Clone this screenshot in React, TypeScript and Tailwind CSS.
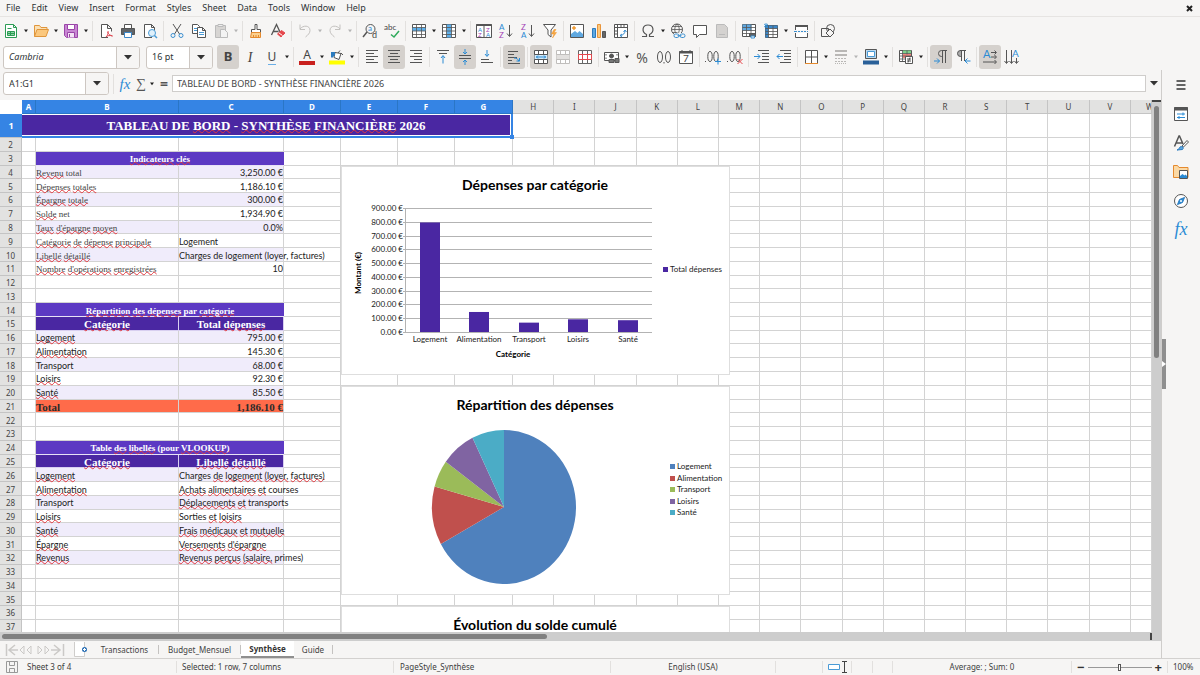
import type { ReactNode } from "react";

const ui = "font-['Noto_Sans','Open_Sans',sans-serif]";
const sans = "font-['Lato',sans-serif]";
const serif = "font-['Liberation_Serif',serif]";

/* ---------- small building blocks ---------- */

const Icon = ({ children, color = "#555" }: { children: ReactNode; color?: string }) => (
  <svg width="16" height="16" viewBox="0 0 16 16" fill="none" stroke={color} aria-hidden="true">
    {children}
  </svg>
);

const Tool = ({ label, pressed, children }: { label: string; pressed?: boolean; children: ReactNode }) => (
  <button
    type="button"
    aria-label={label}
    aria-pressed={pressed}
    className={`flex h-6 w-[22px] shrink-0 items-center justify-center rounded-[3px] ${pressed ? "bg-[#d5d1cd]" : ""}`}
  >
    {children}
  </button>
);

const Arrow = ({ label, dim }: { label: string; dim?: boolean }) => (
  <button type="button" aria-label={label} className="flex h-6 w-2 shrink-0 items-center justify-center">
    <svg width="6" height="4" viewBox="0 0 6 4" fill={dim ? "#b5b5b5" : "#222"} aria-hidden="true">
      <path d="M1 0.5h4L3 3.2z" />
    </svg>
  </button>
);

const Caret = () => (
  <svg width="8" height="5" viewBox="0 0 8 5" fill="#333" aria-hidden="true">
    <path d="M0 0h8L4 4.5z" />
  </svg>
);

const Sep = () => <div className="mx-[2px] h-5 w-px shrink-0 bg-[#e2e0de]" />;

/* ---------- icons ---------- */

const lines = (rows: number[][]) => (
  <path d={rows.map(([x1, x2, y]) => `M${x1} ${y}.5H${x2}`).join("")} />
);

const NewIcon = () => (
  <Icon color="#2c9c55">
    <path d="M2.5 1.5h8l3 3v10h-11zM10.5 1.5v3h3" fill="#fff" />
    <path d="M4.5 8.5h7v4h-7zM4.5 10.5h7M7.5 8.5v4" fill="#8bd5a4" />
    <path d="M4.5 5.5h4" />
  </Icon>
);
const OpenIcon = () => (
  <Icon color="#e0963c">
    <path d="M1.5 13.5v-11h5l1.500 2h6v3" fill="#fbe0b3" />
    <path d="M1.500 13.500L4 6.500h11.500l-2.500 7z" fill="#fbc87e" />
  </Icon>
);
const SaveIcon = () => (
  <Icon color="#9a45a8">
    <path d="M1.500 1.500h13v13h-11l-2-2z" fill="#c886d3" />
    <path d="M4.500 1.500h7v5h-7z" fill="#fff" />
    <path d="M4.500 14.500v-5h7v5" fill="#f3e2f5" />
    <path d="M6.500 11v3" />
  </Icon>
);
const PdfIcon = () => (
  <Icon>
    <path d="M10 14.500H3.500v-13h6l4 4v3M9.500 1.500v4h4" fill="#fff" />
    <path d="M8 14c2-2 2.500-4 2-6M9.500 9c1 2 2.500 3.500 5 4M8 14c1.500-1.500 4-2 6.500-1" stroke="#e0454f" />
  </Icon>
);
const PrintIcon = () => (
  <Icon>
    <path d="M4.500 5.500v-4h7v4" fill="#fff" />
    <path d="M1.500 5.500h13v6h-13z" fill="#606468" />
    <path d="M4.500 9.500h7v5h-7z" fill="#fff" stroke="#3b87c8" />
  </Icon>
);
const PreviewIcon = () => (
  <Icon>
    <path d="M10 14.500H2.500v-13h7l3 3v3M9.500 1.500v3h3" fill="#fff" />
    <circle cx="10" cy="10" r="3.500" fill="#dff0fb" stroke="#4a9bd6" />
    <path d="M12.500 12.500l2.500 2.500" stroke="#4a9bd6" strokeWidth="1.500" />
  </Icon>
);
const CutIcon = () => (
  <Icon>
    <path d="M4 1l6.500 10M12 1L5.500 11" />
    <circle cx="4" cy="12.500" r="2" stroke="#3b8fd0" />
    <circle cx="12" cy="12.500" r="2" stroke="#3b8fd0" />
  </Icon>
);
const CopyIcon = () => (
  <Icon>
    <path d="M1.500 1.500h5l2 2v7h-7z" fill="#fff" />
    <path d="M3 5.500h4M3 7.500h4" stroke="#4a9bd6" />
    <path d="M6.500 4.500h5l3 3v7h-8zM11.500 4.500v3h3" fill="#fff" />
    <path d="M8 9.500h5M8 11.500h5" stroke="#4a9bd6" />
  </Icon>
);
const PasteIcon = () => (
  <Icon color="#bbb">
    <path d="M2.500 2.500h10v12h-10z" fill="#d7d5d3" />
    <path d="M5 1.500h5v2H5z" fill="#eee" />
    <path d="M7.500 6.500h4l3 3v5h-7z" fill="#f3f3f3" />
  </Icon>
);
const BrushIcon = () => (
  <Icon>
    <path d="M7 1.500h2v5h3.500v3h-9v-3H7z" fill="#fff" />
    <path d="M3.500 9.500h9v5h-10z" fill="#fbd08e" stroke="#e58a2e" />
    <path d="M5.500 14v-2M8 14v-2M10.500 14v-2" stroke="#e58a2e" />
  </Icon>
);
const ClearIcon = () => (
  <Icon>
    <path d="M1.500 12L6.500 1.500 10 9M3 8.500h5.500" strokeWidth="1.300" />
    <path d="M7.500 11l4-3.500 3.500 2.500-4 4z" fill="#e5484d" stroke="#e5484d" />
    <path d="M9 10l3.500 2.500" stroke="#fff" />
  </Icon>
);
const UndoIcon = ({ flip }: { flip?: boolean }) => (
  <Icon color="#c3c1bf">
    <path d={flip ? "M13 1.500v5H8M13 6C10 2 3 2 3 7.500c0 2.500 2 4.500 4.500 6.500" : "M3 1.500v5h5M3 6c3-4 10-4 10 1.500 0 2.500-2 4.500-4.500 6.500"} />
  </Icon>
);
const FindIcon = () => (
  <Icon>
    <circle cx="8.500" cy="6" r="4.500" />
    <path d="M5 9L1 14" strokeWidth="1.500" />
    <text x="6" y="8" fontSize="8" fill="#2b8bd4" stroke="none" className={sans}>a</text>
    <text x="10" y="15" fontSize="9" fill="#444" stroke="none" className={sans}>d</text>
  </Icon>
);
const SpellIcon = () => (
  <Icon>
    <text x="0" y="7" fontSize="8" fill="#444" stroke="none" className={sans}>abc</text>
    <path d="M7 11.500l3 2.500 5-6" stroke="#2faa5b" strokeWidth="1.500" />
  </Icon>
);
const GridIcon = ({ fill, area }: { fill?: string; area?: string }) => (
  <Icon>
    <path d="M1.500 1.500h13v13h-13z" fill="#fff" />
    {area && <path d={area} fill={fill} stroke="none" />}
    <path d="M1.500 4.500h13M1.500 8h13M1.500 11.500h13M5.500 1.500v13M10.500 1.500v13" strokeWidth="0.800" />
  </Icon>
);
const SortIcon = ({ top, bottom }: { top: string; bottom: string }) => (
  <Icon>
    <text x="1" y="7" fontSize="8" fill={top === "A" ? "#2b8bd4" : "#a23fb5"} stroke="none" className={sans}>{top}</text>
    <text x="1" y="15" fontSize="8" fill={top === "A" ? "#a23fb5" : "#2b8bd4"} stroke="none" className={sans}>{bottom}</text>
    <path d="M11.500 2v11M9 10.500l2.500 3 2.500-3" />
  </Icon>
);
const SortBoxIcon = () => (
  <Icon>
    <path d="M.5 1.500h15v13H.5zM8 2v12" fill="#fff" />
    <path d="M.5 2h15" strokeWidth="2" />
    <g fontSize="6" stroke="none" className={sans}>
      <text x="2" y="9" fill="#2b8bd4">A</text>
      <text x="2" y="14" fill="#a23fb5">Z</text>
      <text x="10" y="9" fill="#a23fb5">Z</text>
      <text x="10" y="14" fill="#2b8bd4">A</text>
    </g>
  </Icon>
);
const FilterIcon = () => (
  <Icon>
    <path d="M1.500 1.500h12L9 7v7L6 11.500V7z" fill="#fff" />
    <path d="M12 6.500L9.500 11h2.500l-1.500 4 4-5.500H12l2-3z" fill="#f5a742" stroke="#f0942a" strokeWidth="0.500" />
  </Icon>
);
const ImageIcon = () => (
  <Icon>
    <path d="M1.500 1.500h13v13h-13z" fill="#fff" />
    <path d="M2 14v-3l4-3 2.500 2 2-2L14 11v3z" fill="#5fa8e0" stroke="none" />
    <circle cx="5" cy="5" r="1.300" fill="#f7b045" stroke="#f0942a" />
  </Icon>
);
const ChartIcon = () => (
  <Icon>
    <path d="M1.500 5.500h3v9h-3z" fill="#5fa8e0" stroke="#2b7bbf" />
    <path d="M6.500 1.500h3v13h-3z" fill="#fbc87e" stroke="#e8943a" />
    <path d="M11.500 8.500h3v6h-3z" fill="#666" />
  </Icon>
);
const PivotIcon = () => (
  <Icon>
    <path d="M1.500 1.500h13v13h-13z" fill="#fff" />
    <path d="M1.500 4.500h13M4.500 1.500v13M8 1.500v3M11 1.500v3M1.500 8h3M1.500 11h3" />
    <path d="M7 12.500c3 0 5-2 5-5M9 11l-2 1.500L9 14M10.500 9L12 7l1.500 2" stroke="#3b8fd0" />
  </Icon>
);
const OmegaIcon = () => (
  <Icon>
    <path d="M2 13.500h4.500v-2C1 8.500 2.500 2 8 2s7 6.500 1.500 9.500v2H14" strokeWidth="1.200" />
  </Icon>
);
const LinkIcon = () => (
  <Icon>
    <circle cx="7" cy="6.500" r="5.500" />
    <path d="M1.500 6.500h11M7 1c-3 3-3 8 0 11M7 1c3 3 3 8 0 11M2.500 3.500h9M2.500 9.500h5" strokeWidth="0.800" />
    <path d="M4 10h11v5H4z" fill="#f6f5f4" stroke="none" />
    <rect x="4" y="11" width="5" height="3.500" rx="1.700" stroke="#3b8fd0" />
    <rect x="10" y="11" width="5" height="3.500" rx="1.700" stroke="#3b8fd0" />
    <path d="M7.500 12.700h4" stroke="#3b8fd0" />
  </Icon>
);
const CommentIcon = () => (
  <Icon>
    <path d="M1.500 2.500h13v9h-7l-3 3v-3h-3z" fill="#fff" />
  </Icon>
);
const HeaderIcon = () => (
  <Icon color="#bbb">
    <path d="M2.500 1.500h8l3 3v10h-11z" fill="#d4d2d0" />
    <path d="M5 11.500h6" />
  </Icon>
);
const PrintAreaIcon = () => (
  <Icon>
    <path d="M1.500 1.500h13v12h-13z" fill="#fff" />
    <path d="M1.500 1.500h9v6h-9z" fill="#5fa8e0" stroke="none" />
    <path d="M1.500 4.500h13M1.500 7.500h13M1.500 10.500h13M5.500 1.500v12M10 1.500v12" strokeWidth="0.800" />
    <path d="M8.500 10.500h6v3h-6z" fill="#5d6165" />
    <path d="M10 13h3.500v2H10z" fill="#fff" stroke="#3b8fd0" />
  </Icon>
);
const FreezeIcon = () => (
  <Icon>
    <path d="M2.500 2.500h12v12h-12z" fill="#fff" />
    <path d="M2.500 2.500h12v3h-12zM2.500 5.500h3v9h-3z" fill="#3b87c8" stroke="none" />
    <path d="M2.500 5.500h12M2.500 8.500h12M2.500 11.500h12M5.500 2.500v12M10 2.500v12" strokeWidth="0.800" />
    <path d="M3 0v5M1 1l4 3M5 1L1 4" stroke="#2b8bd4" strokeWidth="0.800" />
  </Icon>
);
const SplitIcon = () => (
  <Icon>
    <path d="M2.500 7V2.500h12V7M2.500 10v4.500h12V10" fill="#fff" />
    <path d="M2 3h13" strokeWidth="2" />
    <path d="M1 8.500h3m1 0h2m1 0h2m1 0h2m1 0h1" stroke="#3b8fd0" />
  </Icon>
);
const ShapesIcon = () => (
  <Icon>
    <path d="M1.500 5.500h7v8h-7z" />
    <circle cx="10.500" cy="5.500" r="4" />
    <path d="M10 6l4 4-4 4-4-4z" fill="#f6f5f4" />
  </Icon>
);

const Merge = ({ kind }: { kind: "center" | "merge" | "split" }) => {
  const color = { center: "#555", merge: "#c0bebc", split: "#666" }[kind];
  const tint = { center: "#d4ebfa", merge: "#e2e0de", split: "#fff" }[kind];
  return (
    <Icon color={color}>
      <path d="M1.500 1.500h13v13h-13z" fill="#fff" />
      <path d="M1.500 5.500h13v5h-13z" fill={tint} stroke="none" />
      <path d="M1.500 5.500h13M1.500 10.500h13M5.500 1.500v4M10.500 1.500v4M5.500 10.500v4M10.500 10.500v4" />
      {kind === "center" && <path d="M3 8h10M5 6.500L3.500 8 5 9.500M11 6.500L12.500 8 11 9.500" stroke="#2b8bd4" />}
      {kind === "split" && <path d="M1.500 5.500h13v5h-13zM5.500 5.500v5M10.500 5.500v5" stroke="#e5484d" />}
    </Icon>
  );
};
const AlignIcon = ({ mode }: { mode: "left" | "center" | "right" }) => {
  const ends = { left: [[2, 14], [2, 10]], center: [[2, 14], [4, 12]], right: [[2, 14], [6, 14]] }[mode];
  return <Icon>{lines([1, 4, 7, 10, 13].map((y, i) => [...ends[i % 2], y]))}</Icon>;
};
const VAlignIcon = ({ mode }: { mode: "top" | "middle" | "bottom" }) => (
  <Icon>
    {mode === "top" && <>{lines([[2, 14, 1], [4, 12, 4]])}<path d="M8 14.500V7M6 9l2-2.500L10 9" stroke="#2b8bd4" /></>}
    {mode === "middle" && <>{lines([[2, 14, 6], [2, 14, 9]])}<path d="M8 0v4.500M6 3l2 2 2-2M8 16v-5M6 13l2-2 2 2" stroke="#2b8bd4" /></>}
    {mode === "bottom" && <>{lines([[2, 10, 10], [2, 14, 13]])}<path d="M8 1v6M6 5l2 2.500L10 5" stroke="#2b8bd4" /></>}
  </Icon>
);
const WrapIcon = () => (
  <Icon>
    {lines([[2, 12, 2], [2, 8, 5], [2, 11, 8], [2, 6, 11], [2, 14, 14]])}
    <path d="M8 9c3 0 4 1 5 3.500M10.500 12h3V9" stroke="#2b8bd4" />
  </Icon>
);
const CurrencyIcon = () => (
  <Icon>
    <path d="M.5 3.500h14v8H.5z" fill="#fff" />
    <circle cx="7.500" cy="7" r="2" fill="#555" />
    <path d="M2 5v1.500M13 5v1.500M2 8.500V10" />
    <path d="M5 10.500h5v3H5zM11 9.500h4v4h-4z" fill="#777" />
  </Icon>
);
const DateIcon = () => (
  <Icon>
    <path d="M1.500 2.500h13v12h-13z" fill="#fff" />
    <path d="M1 3.500h14" strokeWidth="2" />
    <path d="M4 1v2M12 1v2" />
    <text x="5" y="13" fontSize="10" fill="#444" stroke="none" className={sans}>7</text>
  </Icon>
);
const DecimalIcon = ({ remove }: { remove?: boolean }) => (
  <Icon>
    <path d="M.5 12v1" />
    <ellipse cx="5" cy="7.500" rx="2.200" ry="5" />
    <ellipse cx="11" cy="7.500" rx="2.200" ry="5" />
    {remove ? <path d="M10.500 10l5 5M15.500 10l-5 5" stroke="#e5484d" /> : <path d="M13 9.500v6M10 12.500h6" stroke="#2b8bd4" />}
  </Icon>
);
const NumberIcon = () => (
  <Icon>
    <ellipse cx="4" cy="8" rx="2.500" ry="5.500" />
    <path d="M8 13v1.500" />
    <ellipse cx="12" cy="8" rx="2.500" ry="5.500" />
  </Icon>
);
const IndentIcon = ({ out }: { out?: boolean }) => (
  <Icon>
    {lines([[4, 15, 1], [8, 15, 4], [8, 15, 7], [8, 15, 10], [4, 15, 13]])}
    <path d={out ? "M7 7.500H1M3.500 5L1 7.500 3.500 10" : "M0 7.500h6M3.500 5L6 7.500 3.500 10"} stroke="#2b8bd4" />
  </Icon>
);
const BordersIcon = () => (
  <Icon>
    <path d="M2.500 14.500v-13h12v13" fill="#fff" />
    <path d="M8.500 1.500v13M2.500 8h12" />
    <path d="M2 14.500h13" stroke="#e58a2e" />
  </Icon>
);
const LineStyleIcon = () => (
  <Icon color="#b9b7b5">
    <path d="M2 2h12M2 6h12" strokeWidth="2" />
    <path d="M2 9.500h12M2 12.500h12" strokeDasharray="2 1" />
    <path d="M2 14.500h12" strokeDasharray="1 1" />
  </Icon>
);
const BorderColorIcon = () => (
  <Icon>
    <path d="M2.500 .5h11v9h-11z" fill="#bcd9ef" />
    <path d="M4.500 2.500h7v5h-7z" fill="#fff" stroke="#4a9bd6" />
    <path d="M0 11.500h16v4H0z" fill="#2a6099" stroke="none" />
  </Icon>
);
const ConditionalIcon = () => (
  <Icon>
    <path d="M1.500 1.500h12v11h-12z" fill="#fff" />
    <path d="M5 1.500h8v3H5z" fill="#7fd18c" stroke="none" />
    <path d="M5 5h8v4H5z" fill="#f2857f" stroke="none" />
    <path d="M1.500 4.500h12M1.500 7h12M1.500 10h12M4.500 1.500v11M9 1.500v4" strokeWidth="0.800" />
    <path d="M7.500 7.500h7v7h-7z" fill="#fff" />
    <path d="M9 10h4M9 12h4M12 8.500L10 13.500" />
  </Icon>
);
const ParagraphIcon = ({ rtl }: { rtl?: boolean }) => (
  <Icon>
    {rtl ? (
      <>
        <path d="M5.500 1.500a3 3 0 0 0 0 6h1v-6z" fill="#aaa" />
        <path d="M6.500 12V1.500M9.500 12V1.500M5 1.500h6" />
        <path d="M15.500 12H10M12.500 9.500L10 12l2.500 2.500" stroke="#2b8bd4" />
      </>
    ) : (
      <>
        <path d="M9.500 14V1.500M12.500 14V1.500M14 1.500H8.500a3 3 0 0 0 0 6h1" />
        <path d="M1 12h5.500M4 9.500L6.500 12 4 14.500" stroke="#2b8bd4" />
      </>
    )}
  </Icon>
);
const TextDirIcon = ({ vertical }: { vertical?: boolean }) => (
  <Icon>
    {vertical ? (
      <>
        <path d="M2.500 1v13M7.500 1v13M12.500 9v5M.5 12l2 2.500 2-2.500M5.500 12l2 2.500 2-2.500M10.500 12l2 2.500 2-2.500" />
        <text x="8" y="8" fontSize="10" fill="#2b8bd4" stroke="none" className={sans}>A</text>
      </>
    ) : (
      <>
        <path d="M9 3.500h5M9 8h5M1 13h13M12.500 1.500l2 2-2 2M12.500 6l2 2-2 2M12.500 11l2 2-2 2" />
        <text x="1" y="9" fontSize="11" fill="#2b8bd4" stroke="none" className={sans}>A</text>
      </>
    )}
  </Icon>
);

/* ---------- toolbars ---------- */

const StandardToolbar = () => (
  <div className="flex h-[27px] shrink-0 items-center" role="toolbar" aria-label="Standard">
    <Tool label="New"><NewIcon /></Tool>
    <Arrow label="New options" />
    <Tool label="Open"><OpenIcon /></Tool>
    <Arrow label="Open options" />
    <Tool label="Save"><SaveIcon /></Tool>
    <Arrow label="Save options" />
    <Sep />
    <Tool label="Export as PDF"><PdfIcon /></Tool>
    <Tool label="Print"><PrintIcon /></Tool>
    <Tool label="Print preview"><PreviewIcon /></Tool>
    <Sep />
    <Tool label="Cut"><CutIcon /></Tool>
    <Tool label="Copy"><CopyIcon /></Tool>
    <Tool label="Paste"><PasteIcon /></Tool>
    <Arrow label="Paste options" dim />
    <Sep />
    <Tool label="Clone formatting"><BrushIcon /></Tool>
    <Tool label="Clear formatting"><ClearIcon /></Tool>
    <Sep />
    <Tool label="Undo"><UndoIcon /></Tool>
    <Arrow label="Undo history" dim />
    <Tool label="Redo"><UndoIcon flip /></Tool>
    <Arrow label="Redo history" dim />
    <Sep />
    <Tool label="Find and replace"><FindIcon /></Tool>
    <Tool label="Spelling"><SpellIcon /></Tool>
    <Sep />
    <Tool label="Row"><GridIcon fill="#5fb0ea" area="M1.500 4.500h13v3.500h-13z" /></Tool>
    <Arrow label="Row options" />
    <Tool label="Column"><GridIcon fill="#5fb0ea" area="M5.500 1.500h5v13h-5z" /></Tool>
    <Arrow label="Column options" />
    <Sep />
    <Tool label="Sort"><SortBoxIcon /></Tool>
    <Tool label="Sort ascending"><SortIcon top="A" bottom="Z" /></Tool>
    <Tool label="Sort descending"><SortIcon top="Z" bottom="A" /></Tool>
    <Tool label="AutoFilter"><FilterIcon /></Tool>
    <Sep />
    <Tool label="Insert image"><ImageIcon /></Tool>
    <Tool label="Insert chart"><ChartIcon /></Tool>
    <Tool label="Pivot table"><PivotIcon /></Tool>
    <Sep />
    <Tool label="Special character"><OmegaIcon /></Tool>
    <Arrow label="More characters" />
    <Tool label="Hyperlink"><LinkIcon /></Tool>
    <Tool label="Comment"><CommentIcon /></Tool>
    <Tool label="Headers and footers"><HeaderIcon /></Tool>
    <Sep />
    <Tool label="Print area"><PrintAreaIcon /></Tool>
    <Tool label="Freeze"><FreezeIcon /></Tool>
    <Arrow label="Freeze options" />
    <Tool label="Split window"><SplitIcon /></Tool>
    <Sep />
    <Tool label="Draw functions"><ShapesIcon /></Tool>
  </div>
);

const Combo = ({ label, value, width, italic }: { label: string; value: string; width: string; italic?: boolean }) => (
  <div className={`flex h-[23px] shrink-0 overflow-hidden rounded-[3px] border border-[#cdc7c2] bg-white ${width}`}>
    <input aria-label={label} defaultValue={value} className={`min-w-0 flex-1 px-[5px] text-[9px] text-[#2e3436] ${italic ? "italic" : ""}`} />
    <button type="button" aria-label={`${label} list`} className="flex w-[23px] items-center justify-center border-l border-[#cdc7c2] bg-[#f6f5f4]">
      <Caret />
    </button>
  </div>
);

const FormattingToolbar = () => (
  <div className="flex h-[26px] shrink-0 items-center pl-[3px]" role="toolbar" aria-label="Formatting">
    <Combo label="Font name" value="Cambria" width="w-[137px]" italic />
    <div className="w-[6px]" />
    <Combo label="Font size" value="16 pt" width="w-[67px]" />
    <div className="w-1" />
    <Tool label="Bold" pressed><span className="text-[13px] font-bold text-[#444]">B</span></Tool>
    <Tool label="Italic"><span className={`text-[14px] italic text-[#444] ${serif}`}>I</span></Tool>
    <Tool label="Underline"><span className="border-b border-[#6aaee6] text-[12px] leading-[14px] text-[#444]">U</span></Tool>
    <Arrow label="Underline options" />
    <Sep />
    <Tool label="Font colour">
      <span className="flex w-4 flex-col items-center text-[12px] leading-[12px] text-[#444]">A<span className="h-1 w-4 bg-[#c9211e]" /></span>
    </Tool>
    <Arrow label="Font colour options" />
    <Tool label="Highlighting">
      <Icon>
        <path d="M6 3.500l6 1-2 6-5-2z" fill="#fff" />
        <path d="M2 8V3h4v3L3 9z" fill="#2b7bbf" stroke="none" />
        <path d="M9 4l2-2.500M12 4l2 2" />
        <path d="M0 11.500h16v4H0z" fill="#ffff00" stroke="none" />
      </Icon>
    </Tool>
    <Arrow label="Highlighting options" />
    <Sep />
    <Tool label="Align left"><AlignIcon mode="left" /></Tool>
    <Tool label="Align centre" pressed><AlignIcon mode="center" /></Tool>
    <Tool label="Align right"><AlignIcon mode="right" /></Tool>
    <Sep />
    <Tool label="Align top"><VAlignIcon mode="top" /></Tool>
    <Tool label="Centre vertically" pressed><VAlignIcon mode="middle" /></Tool>
    <Tool label="Align bottom"><VAlignIcon mode="bottom" /></Tool>
    <Sep />
    <Tool label="Wrap text" pressed><WrapIcon /></Tool>
    <Sep />
    <Tool label="Merge and centre" pressed><Merge kind="center" /></Tool>
    <Tool label="Merge cells"><Merge kind="merge" /></Tool>
    <Tool label="Unmerge cells"><Merge kind="split" /></Tool>
    <Sep />
    <Tool label="Currency"><CurrencyIcon /></Tool>
    <Arrow label="Currency options" />
    <Tool label="Percent"><span className="text-[14px] text-[#555]">%</span></Tool>
    <Tool label="Number"><NumberIcon /></Tool>
    <Tool label="Date"><DateIcon /></Tool>
    <Sep />
    <Tool label="Add decimal place"><DecimalIcon /></Tool>
    <Tool label="Delete decimal place"><DecimalIcon remove /></Tool>
    <Sep />
    <Tool label="Increase indent"><IndentIcon /></Tool>
    <Tool label="Decrease indent"><IndentIcon out /></Tool>
    <Sep />
    <Tool label="Borders"><BordersIcon /></Tool>
    <Arrow label="Borders options" />
    <Tool label="Border style"><LineStyleIcon /></Tool>
    <Arrow label="Border style options" dim />
    <Tool label="Border colour"><BorderColorIcon /></Tool>
    <Arrow label="Border colour options" />
    <Sep />
    <Tool label="Conditional"><ConditionalIcon /></Tool>
    <Arrow label="Conditional options" />
    <Sep />
    <Tool label="Left to right" pressed><ParagraphIcon /></Tool>
    <Tool label="Right to left"><ParagraphIcon rtl /></Tool>
    <Sep />
    <Tool label="Horizontal text" pressed><TextDirIcon /></Tool>
    <Tool label="Vertical text"><TextDirIcon vertical /></Tool>
  </div>
);

const FormulaBar = () => (
  <div className="mb-[3px] flex h-[27px] shrink-0 items-center pl-[3px]">
    <Combo label="Name box" value="A1:G1" width="w-[106px]" />
    <div className="ml-1 h-5 w-px bg-[#e2e0de]" />
    <button type="button" aria-label="Function wizard" className={`w-[22px] text-[15px] leading-4 italic text-[#2b8bd4] ${serif}`}>fx</button>
    <button type="button" aria-label="Select function" className={`w-2 text-[14px] leading-4 text-[#555] ${serif}`}>∑</button>
    <div className="w-1" />
    <Arrow label="Function list" />
    <button type="button" aria-label="Formula" className="w-4 text-[14px] leading-4 font-bold text-[#555]">=</button>
    <input
      aria-label="Input line"
      defaultValue="TABLEAU DE BORD - SYNTHÈSE FINANCIÈRE 2026"
      className="h-[17px] min-w-0 flex-1 border border-[#cfcdcb] bg-white px-1 text-[9px] text-[#444]"
    />
    <button type="button" aria-label="Expand formula bar" className="flex w-[15px] justify-center"><Caret /></button>
  </div>
);

/* ---------- sheet ---------- */

// A word that starts with ~ is flagged by the spell checker.
const Words = ({ text }: { text: string }) => (
  <>
    {text.split(" ").map((w, i) => (
      <span key={i}>
        {i > 0 && " "}
        {w.startsWith("~") ? (
          <span className="underline decoration-[#e0383e] decoration-wavy decoration-1 -underline-offset-1 [text-decoration-skip-ink:none]">{w.slice(1)}</span>
        ) : (
          w
        )}
      </span>
    ))}
  </>
);

type Kind = "kpi" | "plain" | "band" | "head" | "total";
type Row = { kind: Kind; b: string; c?: string; num?: boolean; shade?: boolean };

const rows: Record<number, Row> = {
  3: { kind: "band", b: "~Indicateurs ~clés" },
  4: { kind: "kpi", b: "~Revenu total", c: "3,250.00 €", num: true, shade: true },
  5: { kind: "kpi", b: "~Dépenses ~totales", c: "1,186.10 €", num: true },
  6: { kind: "kpi", b: "~Épargne ~totale", c: "300.00 €", num: true, shade: true },
  7: { kind: "kpi", b: "~Solde net", c: "1,934.90 €", num: true },
  8: { kind: "kpi", b: "~Taux ~d'épargne ~moyen", c: "0.0%", num: true, shade: true },
  9: { kind: "kpi", b: "~Catégorie ~de ~dépense ~principale", c: "Logement" },
  10: { kind: "kpi", b: "~Libellé ~détaillé", c: "Charges de logement (loyer, factures)", shade: true },
  11: { kind: "kpi", b: "~Nombre ~d'opérations ~enregistrées", c: "10", num: true },
  14: { kind: "band", b: "~Répartition ~des ~dépenses par ~catégorie" },
  15: { kind: "head", b: "~Catégorie", c: "Total ~dépenses" },
  16: { kind: "plain", b: "~Logement", c: "795.00 €", num: true, shade: true },
  17: { kind: "plain", b: "~Alimentation", c: "145.30 €", num: true },
  18: { kind: "plain", b: "Transport", c: "68.00 €", num: true, shade: true },
  19: { kind: "plain", b: "~Loisirs", c: "92.30 €", num: true },
  20: { kind: "plain", b: "~Santé", c: "85.50 €", num: true, shade: true },
  21: { kind: "total", b: "Total", c: "1,186.10 €", num: true },
  24: { kind: "band", b: "Table ~des ~libellés (pour ~VLOOKUP)" },
  25: { kind: "head", b: "~Catégorie", c: "~Libellé ~détaillé" },
  26: { kind: "plain", b: "~Logement", c: "Charges ~de ~logement ~(loyer, ~factures)", shade: true },
  27: { kind: "plain", b: "~Alimentation", c: "~Achats ~alimentaires ~et courses" },
  28: { kind: "plain", b: "Transport", c: "~Déplacements ~et transports", shade: true },
  29: { kind: "plain", b: "~Loisirs", c: "Sorties ~et ~loisirs" },
  30: { kind: "plain", b: "~Santé", c: "~Frais ~médicaux ~et ~mutuelle", shade: true },
  31: { kind: "plain", b: "~Épargne", c: "~Versements ~d'épargne" },
  32: { kind: "plain", b: "~Revenus", c: "~Revenus ~perçus ~(salaire, primes)", shade: true },
};

const pad = "px-0 pt-[2px] pb-0";
const cell = `border-r border-b border-[#d3d3d3] ${pad}`;
const headCell = `border-r border-b border-[#d8cff0] bg-[#4a27a2] text-center text-[11px] font-bold text-white ${pad} ${serif}`;
const totalCell = `${cell} bg-[#ff6b4a] text-[11px] font-bold text-[#2b2b2b] ${serif}`;
const cols = "ABCDEFGHIJKLMNOPQRSTUVW".split("");
const widths: Record<string, string> = { A: "w-[14px]", B: "w-[143px]", C: "w-[105px]", D: "w-[57px]", E: "w-[57px]", F: "w-[57px]", G: "w-[58px]", W: "w-[21px]" };

const Blank = ({ n }: { n: number }) => (
  <>
    {Array.from({ length: n }, (_, i) => (
      <td key={i} className={cell} />
    ))}
  </>
);

const DataCells = ({ row }: { row: Row }) => {
  if (row.kind === "band") {
    return (
      <td colSpan={2} className={`border-b border-[#e8e2f6] bg-[#5c39c3] text-center text-[9px] font-bold text-white ${pad} ${serif}`}>
        <Words text={row.b} />
      </td>
    );
  }
  if (row.kind === "head") {
    return (
      <>
        <td className={headCell}><Words text={row.b} /></td>
        <td className={headCell}><Words text={row.c ?? ""} /></td>
      </>
    );
  }
  if (row.kind === "total") {
    return (
      <>
        <td className={totalCell}>{row.b}</td>
        <td className={`${totalCell} text-right`}>{row.c}</td>
      </>
    );
  }
  const bg = row.shade ? "bg-[#f0ecfb]" : "";
  return (
    <>
      <td className={`${cell} ${bg} text-[9px] ${row.kind === "kpi" ? `text-[#444] ${serif}` : "text-[#222]"}`}><Words text={row.b} /></td>
      <td className={`${cell} ${bg} text-[9px] text-[#222] ${row.num ? "text-right" : ""}`}><Words text={row.c ?? ""} /></td>
    </>
  );
};

const Grid = () => (
  <table className={`h-[534px] w-full table-fixed border-separate border-spacing-0 leading-[10px] whitespace-nowrap ${sans}`}>
    <thead className={ui}>
      <tr className="h-[14px] text-[8px]">
        <th className="w-[22px] p-0" aria-label="Select all" />
        {cols.map((c, i) => (
          <th
            key={c}
            className={`h-[14px] overflow-hidden border-r border-b p-0 leading-3 ${widths[c] ?? ""} ${i < 7 ? "border-[#2a76c6] bg-[#3584e4] font-bold text-white" : "border-[#c4c4c4] bg-[#e2e2e1] font-normal text-[#444]"} ${c === "W" ? "pl-[15px]" : ""}`}
          >
            {c}
          </th>
        ))}
      </tr>
    </thead>
    <tbody>
      <tr className="h-6">
        <th className={`border-b border-[#c4c4c4] bg-[#3584e4] p-0 text-[9px] font-bold text-white ${ui}`}>1</th>
        <td colSpan={7} className="relative h-6 border-r-2 border-b-2 border-[#3584e4] bg-white p-0 pt-px pr-px pb-px">
          <div className={`flex h-[20px] items-center justify-center bg-[#4a27a2] pt-px text-[13px] font-bold text-white ${serif}`}>
            <span><Words text="TABLEAU DE ~BORD - ~SYNTHÈSE ~FINANCIÈRE 2026" /></span>
          </div>
          <span className="absolute -right-[3px] -bottom-[3px] size-1 bg-[#3584e4]" />
        </td>
        <Blank n={16} />
      </tr>
      {Array.from({ length: 36 }, (_, i) => i + 2).map((n) => (
        <tr key={n}>
          <th className={`border-r border-b border-[#c4c4c4] bg-[#e2e2e1] text-[8px] font-normal text-[#444] ${pad} ${ui}`}>{n}</th>
          <td className={cell} />
          {rows[n] ? <DataCells row={rows[n]} /> : <Blank n={2} />}
          <Blank n={20} />
        </tr>
      ))}
    </tbody>
  </table>
);

/* ---------- charts ---------- */

const spend = [
  { name: "Logement", value: 795, color: "#4f81bd" },
  { name: "Alimentation", value: 145.3, color: "#c0504d" },
  { name: "Transport", value: 68, color: "#9bbb59" },
  { name: "Loisirs", value: 92.3, color: "#8064a2" },
  { name: "Santé", value: 85.5, color: "#4bacc6" },
];

const ChartBox = ({ title, children }: { title: string; children?: ReactNode }) => (
  <section className={`h-[209px] w-[389px] shrink-0 border border-[#dedede] bg-white ${sans}`}>
    <svg width="387" height="207" viewBox="0 0 387 207" role="img" aria-label={title}>
      <text x="193" y="23" textAnchor="middle" fontSize="14" fontWeight="bold" fill="#000">{title}</text>
      {children}
    </svg>
  </section>
);

const BarChart = () => {
  const y = (v: number) => 165 - (v / 900) * 124;
  return (
    <ChartBox title="Dépenses par catégorie">
      {Array.from({ length: 10 }, (_, i) => i * 100).map((v) => (
        <g key={v}>
          <path d={`M61 ${Math.round(y(v)) + 0.5}H310`} stroke="#b3b3b3" />
          <text x="61" y={y(v) + 3} textAnchor="end" fontSize="8" fill="#222">{v}.00 €</text>
        </g>
      ))}
      <path d="M63.500 41v125" stroke="#b3b3b3" />
      {spend.map((s, i) => (
        <g key={s.name}>
          <rect x={78 + Math.round(i * 49.4)} y={y(s.value)} width="20" height={165 - y(s.value)} fill="#4a27a2" />
          <text x={88 + Math.round(i * 49.4)} y="175" textAnchor="middle" fontSize="8" fill="#222">{s.name}</text>
        </g>
      ))}
      <text x="171" y="190" textAnchor="middle" fontSize="8" fontWeight="bold">Catégorie</text>
      <text transform="translate(19 106) rotate(-90)" textAnchor="middle" fontSize="8" fontWeight="bold">Montant (€)</text>
      <rect x="321" y="100" width="5" height="5" fill="#4a27a2" />
      <text x="328" y="105" fontSize="8" fill="#222">Total dépenses</text>
    </ChartBox>
  );
};

const PieChart = () => {
  const total = spend.reduce((sum, s) => sum + s.value, 0);
  const point = (v: number) => {
    const a = (v / total) * Math.PI * 2;
    return `${162 + 72 * Math.sin(a)} ${120 - 77 * Math.cos(a)}`;
  };
  let from = 0;
  return (
    <ChartBox title="Répartition des dépenses">
      {spend.map((s, i) => {
        const start = from;
        from += s.value;
        return (
          <g key={s.name}>
            <path d={`M162 120L${point(start)}A72 77 0 ${s.value > total / 2 ? 1 : 0} 1 ${point(from)}Z`} fill={s.color} />
            <rect x="328" y={Math.round(77 + i * 11.6)} width="5" height="5" fill={s.color} />
            <text x="335" y={Math.round(82 + i * 11.6)} fontSize="8" fill="#222">{s.name}</text>
          </g>
        );
      })}
    </ChartBox>
  );
};

/* ---------- window parts ---------- */

const Sidebar = () => (
  <aside className="relative flex w-[39px] shrink-0 flex-col items-center border-l border-[#cfcdcb]">
    <button type="button" aria-label="Sidebar settings" className="flex h-[29px] items-center">
      <Icon color="#333"><path d="M3.500 4h9M3.500 8h9M3.500 12h9" strokeWidth="1.500" /></Icon>
    </button>
    <button type="button" aria-label="Properties" className="flex h-[29px] items-center">
      <Icon><path d="M1.500 1.500h13v13h-13z" fill="#fff" /><path d="M1 3h14" strokeWidth="3" /><path d="M4 8h8M4 11.500h8M10 6.500v3M6 10v3" stroke="#2b8bd4" /></Icon>
    </button>
    <button type="button" aria-label="Styles" className="flex h-[29px] items-center">
      <Icon><path d="M1.500 11.500L6 1h.5L10 9M3 8h6" strokeWidth="1.500" /><path d="M9 11l5-5.500 1.500 1.500-5 5z" fill="#fff" /><path d="M4 15c2 0 2-3 4-3.500 2 0 3 1.500 1.500 3z" fill="#5fa8e0" stroke="#2b7bbf" /></Icon>
    </button>
    <button type="button" aria-label="Gallery" className="flex h-[29px] items-center">
      <Icon color="#e58a2e"><path d="M.5 13.500v-12h4l1.500 2h9v10z" fill="#fbd9a5" /><path d="M6.500 6.500h8v8h-8z" fill="#fff" stroke="#555" /><path d="M7 14v-2l2.500-2 2 1.500 1-1L14 12v2z" fill="#2b8bd4" stroke="none" /></Icon>
    </button>
    <button type="button" aria-label="Navigator" className="flex h-[29px] items-center">
      <Icon><circle cx="8" cy="8" r="6.500" fill="#fff" /><path d="M11.500 4.500L9.500 9.500 4.500 11.500 6.500 6.500z" fill="#2b8bd4" stroke="#2b7bbf" /><circle cx="8" cy="8" r="1" fill="#fff" stroke="none" /></Icon>
    </button>
    <button type="button" aria-label="Functions" className={`h-[29px] text-[18px] italic text-[#2b8bd4] ${serif}`}>fx</button>
    <button type="button" aria-label="Hide sidebar" className="absolute top-[269px] left-0 flex h-[50px] w-1 items-center bg-[#8f8f8f]">
      <svg width="4" height="6" viewBox="0 0 4 6" fill="#fff" aria-hidden="true"><path d="M0 0l4 3-4 3z" /></svg>
    </button>
  </aside>
);

const SheetTabs = () => (
  <div className="flex h-[17px] shrink-0 items-stretch text-[8px] text-[#444]">
    <div className="flex w-[66px] items-center pl-1">
      <svg width="62" height="12" viewBox="0 0 62 12" fill="none" stroke="#cbc9c7" aria-hidden="true">
        <path d="M2.500 0v12M11 1L5 6l6 5M5 6h9" strokeWidth="1.500" />
        <path d="M20 2l-4 4 4 4zM27 2l-4 4 4 4zM34 2l4 4-4 4zM41 2l4 4-4 4z" />
        <path d="M50 1l6 5-6 5M56 6h-9M59.500 0v12" strokeWidth="1.500" />
      </svg>
    </div>
    <button type="button" aria-label="Add sheet" className="ml-2 flex w-[17px] items-center">
      <svg width="14" height="15" viewBox="0 0 14 15" aria-hidden="true">
        <path d="M.5 0v14.500h10V0" fill="#fff" stroke="#cfcdcb" />
        <circle cx="10.500" cy="7.500" r="2.500" fill="#2a6fb5" />
        <path d="M9 7.500h3M10.500 6v3" stroke="#fff" />
      </svg>
    </button>
    <button type="button" className="my-1 flex w-[68px] items-center justify-center border-r border-[#c4c2c0]">Transactions</button>
    <button type="button" className="my-1 flex w-[82px] items-center justify-center border-r border-[#c4c2c0]">Budget_Mensuel</button>
    <button type="button" className="w-[53px] border-b-2 border-[#8f8f8f] bg-white font-bold text-[#333]">Synthèse</button>
    <button type="button" className="my-1 flex w-[39px] items-center justify-center border-r border-[#c4c2c0]">Guide</button>
  </div>
);

const StatusBar = () => (
  <footer className="grid h-[17px] shrink-0 grid-cols-[24px_152fr_217fr_217fr_165fr_47fr_29fr_21fr_20fr_179fr_96px_33px] items-center border-t border-[#d3d1cf] text-[8px] text-[#3d3d3d] [&>*]:flex [&>*]:h-3 [&>*]:items-center [&>*+*+*]:border-l [&>*+*+*]:border-[#e2e0de]">
    <div className="justify-center">
      <svg width="12" height="12" viewBox="0 0 12 12" fill="none" stroke="#999" aria-hidden="true">
        <path d="M.5.500h11v11H.5zM3.500.500v4h5v-4M3.500 11.500v-4h5v4" />
      </svg>
    </div>
    <div className="pl-[3px]">Sheet 3 of 4</div>
    <div className="pl-[5px]">Selected: 1 row, 7 columns</div>
    <div className="pl-[6px]">PageStyle_Synthèse</div>
    <div className="justify-center">English (USA)</div>
    <div />
    <div className="pl-[5px]">
      <svg width="22" height="12" viewBox="0 0 22 12" fill="none" aria-hidden="true">
        <path d="M.5 3.500h11v5H.5z" fill="#fff" stroke="#4a9bd6" />
        <path d="M14 .5h5M14 11.500h5M16.500.500v11" stroke="#444" />
      </svg>
    </div>
    <div />
    <div />
    <div className="justify-center">Average: ; Sum: 0</div>
    <div className="justify-between px-[5px] text-[13px] leading-3 font-bold text-[#333]">
      <button type="button" aria-label="Zoom out">−</button>
      <input
        type="range"
        aria-label="Zoom"
        defaultValue={50}
        className="h-px w-16 appearance-none bg-[#999] [&::-webkit-slider-thumb]:h-[7px] [&::-webkit-slider-thumb]:w-[3px] [&::-webkit-slider-thumb]:appearance-none [&::-webkit-slider-thumb]:border [&::-webkit-slider-thumb]:border-[#555] [&::-webkit-slider-thumb]:bg-white"
      />
      <button type="button" aria-label="Zoom in">+</button>
    </div>
    <div className="pl-[5px]">100%</div>
  </footer>
);

const App = () => (
  <div className={`flex h-screen flex-col overflow-hidden bg-[#f6f5f4] ${ui}`}>
    <nav className="flex h-[17px] shrink-0 items-center justify-between border-b border-[#e6e4e2] text-[9px] text-[#2e3436]">
      <div className="flex gap-[11px] pl-[6px]">
        {["File", "Edit", "View", "Insert", "Format", "Styles", "Sheet", "Data", "Tools", "Window", "Help"].map((m) => (
          <button key={m} type="button">{m}</button>
        ))}
      </div>
      <button type="button" aria-label="Close document" className="mr-[7px]">
        <svg width="7" height="7" viewBox="0 0 7 7" stroke="#222" strokeWidth="2" aria-hidden="true"><path d="M1 1l5 5M6 1L1 6" /></svg>
      </button>
    </nav>
    <StandardToolbar />
    <FormattingToolbar />
    <div className="flex min-h-0 flex-1">
      <div className="flex min-w-0 flex-1 flex-col">
        <FormulaBar />
        <div className="flex min-h-0 flex-1">
          <main className="relative min-w-0 flex-1 overflow-hidden">
            <div className="bg-white"><Grid /></div>
            <div className="absolute top-[66px] left-[341px] flex flex-col gap-[11px]">
              <BarChart />
              <PieChart />
              <ChartBox title="Évolution du solde cumulé" />
            </div>
          </main>
          <div className="w-[9px] shrink-0 border-t-2 border-[#444] bg-[#cdcdcd] px-[2px] pt-1">
            <div className="h-[252px] rounded-full bg-[#808080]" />
          </div>
        </div>
        <div className="flex h-[9px] shrink-0 items-center bg-[#cdcdcd] pl-[2px]">
          <div className="h-[5px] w-[545px] rounded-full bg-[#808080]" />
          <div className="mr-[9px] ml-auto h-[7px] w-[2px] bg-[#444]" />
        </div>
        <SheetTabs />
      </div>
      <Sidebar />
    </div>
    <StatusBar />
  </div>
);

export default App;
